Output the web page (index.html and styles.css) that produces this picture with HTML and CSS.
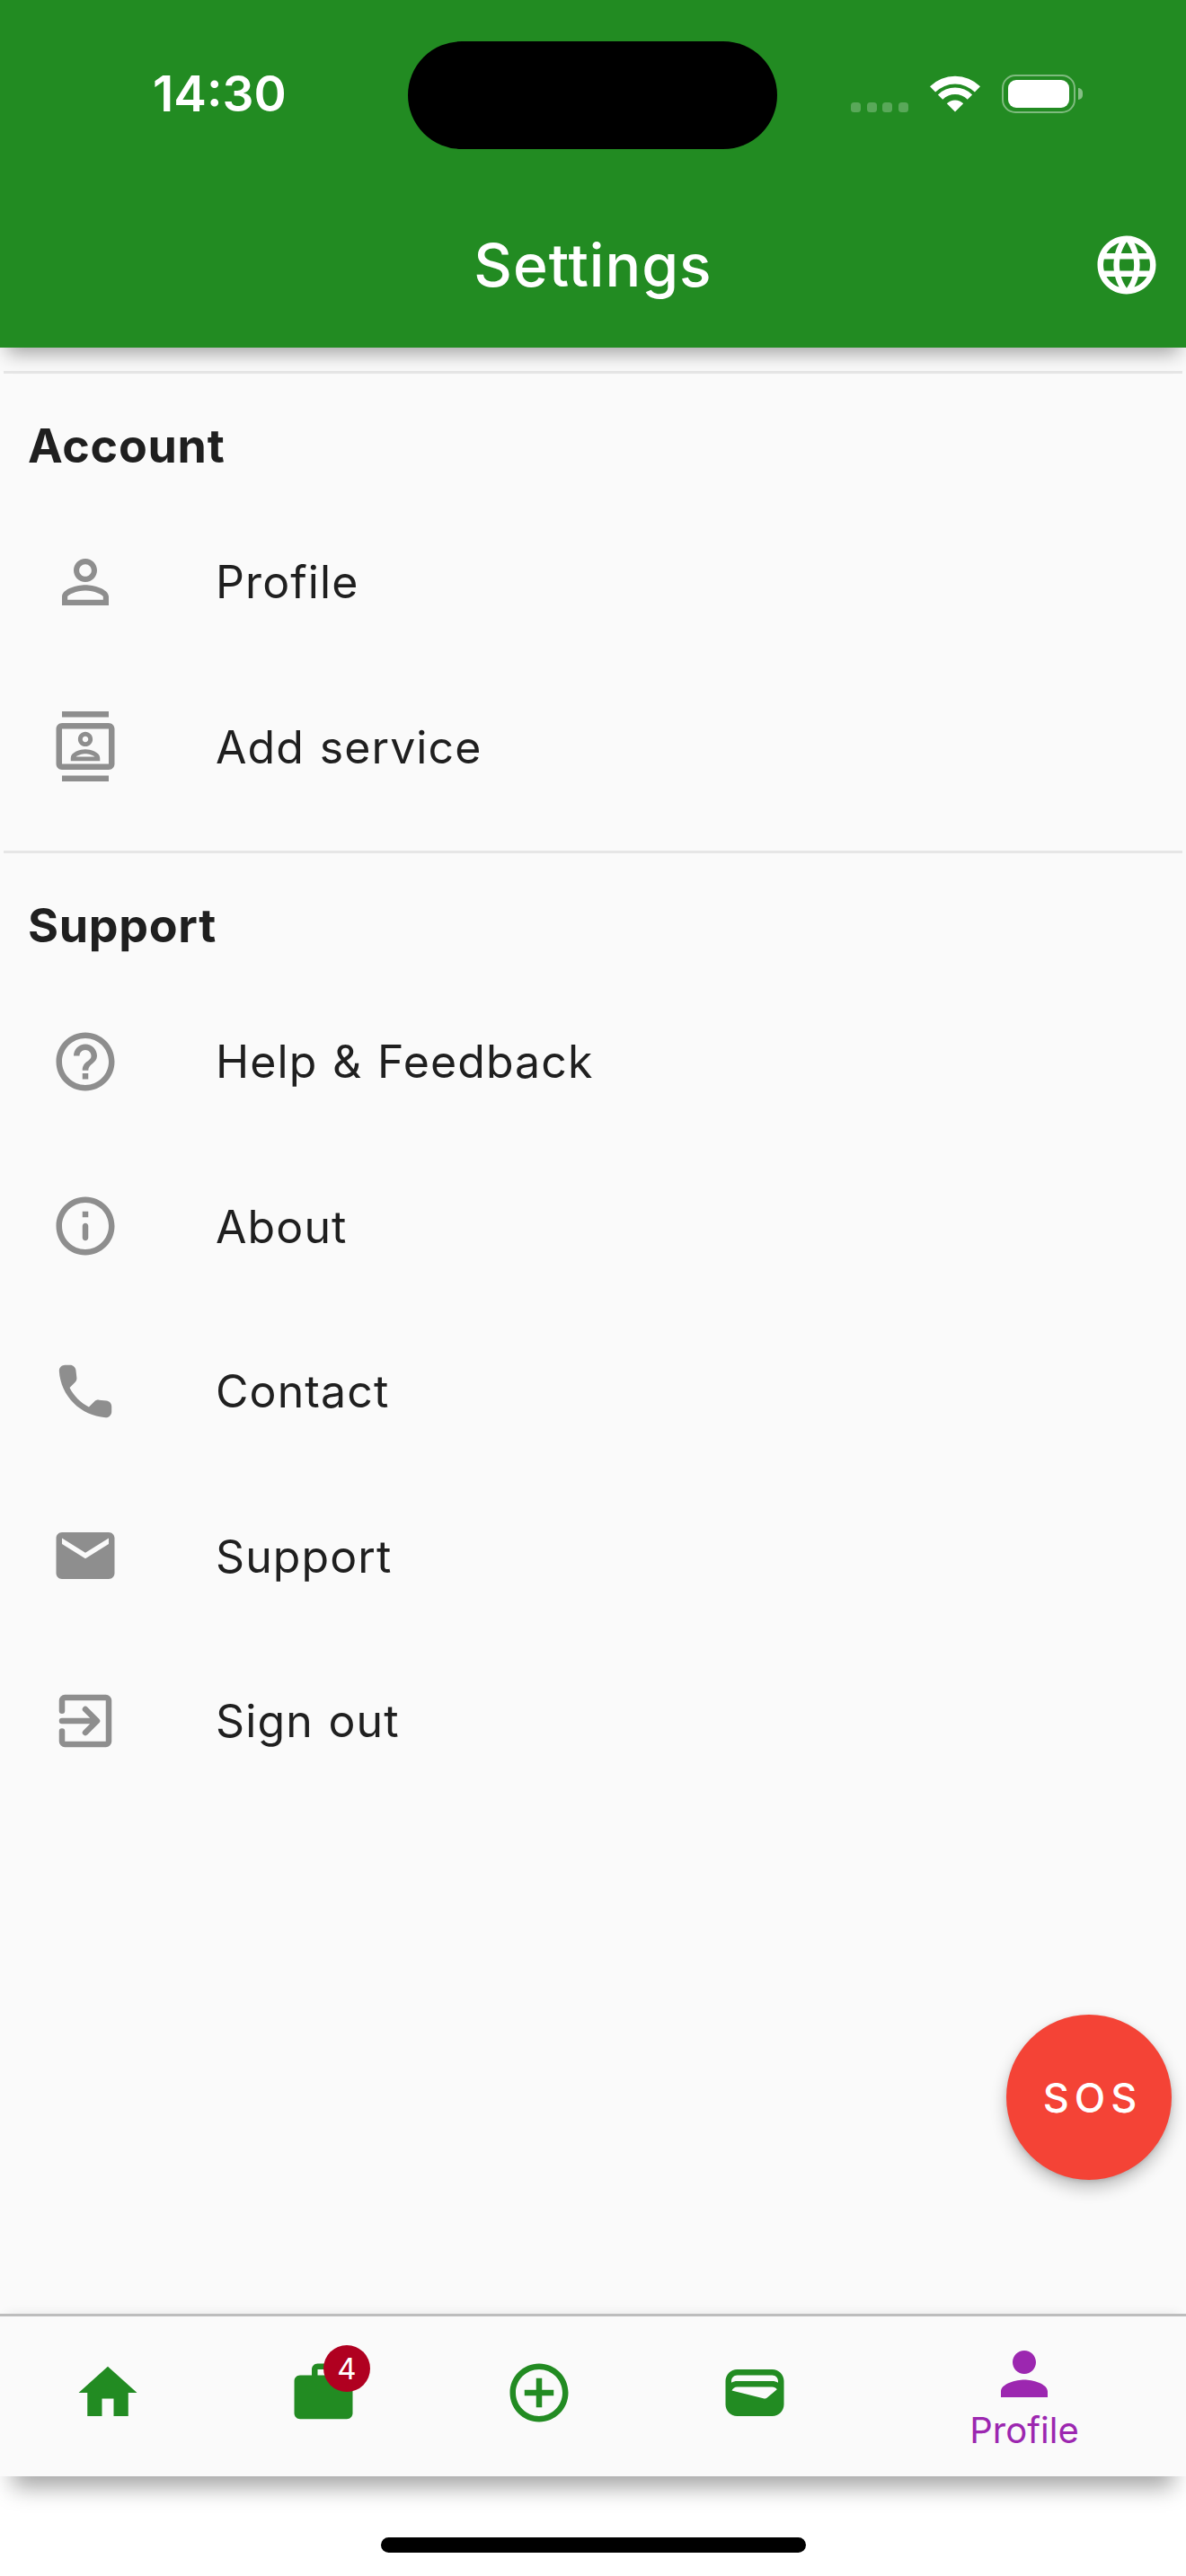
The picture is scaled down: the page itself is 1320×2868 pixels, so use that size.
FILE: index.html
```html
<!DOCTYPE html>
<html lang="en">
<head>
<meta charset="utf-8">
<title>Settings</title>
<link rel="stylesheet" href="styles.css">
</head>
<body>
<div class="screen">
  <header class="app-bar">
    <div class="status-bar">
      <span class="clock">14:30</span>
      <div class="island"></div>
      <div class="status-icons">
        <div class="signal"><i></i><i></i><i></i><i></i></div>
        <svg class="wifi" viewBox="0 0 56 41"><path d="M0 12.2A40 40 0 0 1 56 12.2L49.9 18.6A31 31 0 0 0 6.1 18.6ZM8.9 21.4A27 27 0 0 1 47.1 21.4L41.8 26.7A19.5 19.5 0 0 0 14.2 26.7ZM18.8 31.3A13 13 0 0 1 37.2 31.3L28 40.5Z"/></svg>
        <div class="battery"><div class="battery-fill"></div></div>
        <div class="battery-cap"></div>
      </div>
    </div>
    <div class="title-bar">
      <h1 class="title">Settings</h1>
      <svg class="icon globe" viewBox="0 0 24 24"><path d="M11.99 2C6.47 2 2 6.48 2 12s4.47 10 9.99 10C17.52 22 22 17.52 22 12S17.52 2 11.99 2zm6.93 6h-2.95c-.32-1.25-.78-2.45-1.38-3.56 1.84.63 3.37 1.91 4.33 3.56zM12 4.04c.83 1.2 1.48 2.53 1.91 3.96h-3.82c.43-1.43 1.08-2.76 1.91-3.96zM4.26 14C4.1 13.36 4 12.69 4 12s.1-1.36.26-2h3.38c-.08.66-.14 1.32-.14 2 0 .68.06 1.34.14 2H4.26zm.82 2h2.95c.32 1.25.78 2.45 1.38 3.56-1.84-.63-3.37-1.9-4.33-3.56zm2.95-8H5.08c.96-1.66 2.49-2.93 4.33-3.56C8.81 5.55 8.35 6.75 8.03 8zM12 19.96c-.83-1.2-1.48-2.53-1.91-3.96h3.82c-.43 1.43-1.08 2.76-1.91 3.96zM14.34 14H9.66c-.09-.66-.16-1.32-.16-2 0-.68.07-1.35.16-2h4.68c.09.65.16 1.32.16 2 0 .68-.07 1.34-.16 2zm.25 5.56c.6-1.11 1.06-2.31 1.38-3.56h2.95c-.96 1.65-2.49 2.93-4.33 3.56zM16.36 14c.08-.66.14-1.32.14-2 0-.68-.06-1.34-.14-2h3.38c.16.64.26 1.31.26 2s-.1 1.36-.26 2h-3.38z"/></svg>
    </div>
  </header>

  <main class="content">
    <section class="group">
      <h2 class="group-title">Account</h2>
      <div class="row">
        <svg class="icon" viewBox="0 0 24 24"><path d="M12 5.9c1.16 0 2.1.94 2.1 2.1s-.94 2.1-2.1 2.1S9.9 9.16 9.9 8s.94-2.1 2.1-2.1m0 9c2.97 0 6.1 1.46 6.1 2.1v1.1H5.9V17c0-.64 3.13-2.1 6.1-2.1M12 4C9.79 4 8 5.79 8 8s1.79 4 4 4 4-1.79 4-4-1.79-4-4-4zm0 9c-2.67 0-8 1.34-8 4v3h16v-3c0-2.66-5.33-4-8-4z"/></svg>
        <span class="row-label">Profile</span>
      </div>
      <div class="row">
        <svg class="icon" viewBox="0 0 24 24"><path d="M20 0H4v2h16V0zM4 24h16v-2H4v2zM20 4H4c-1.1 0-2 .9-2 2v12c0 1.1.9 2 2 2h16c1.1 0 2-.9 2-2V6c0-1.1-.9-2-2-2zm0 14H4V6h16v12zm-8-6c1.38 0 2.5-1.12 2.5-2.5S13.38 7 12 7 9.5 8.12 9.5 9.5 10.62 12 12 12zm0-3.5c.55 0 1 .45 1 1s-.45 1-1 1-1-.45-1-1 .45-1 1-1zm5 7.49C17 13.9 13.69 13 12 13s-5 .9-5 2.99V17h10v-1.01zm-8.19-.49c.61-.52 2.03-1 3.19-1 1.17 0 2.59.48 3.2 1H8.81z"/></svg>
        <span class="row-label">Add service</span>
      </div>
    </section>
    <section class="group">
      <h2 class="group-title">Support</h2>
      <div class="row">
        <svg class="icon" viewBox="0 0 24 24"><path d="M11 18h2v-2h-2v2zm1-16C6.48 2 2 6.48 2 12s4.48 10 10 10 10-4.48 10-10S17.52 2 12 2zm0 18c-4.41 0-8-3.59-8-8s3.59-8 8-8 8 3.59 8 8-3.59 8-8 8zm0-14c-2.21 0-4 1.79-4 4h2c0-1.1.9-2 2-2s2 .9 2 2c0 2-3 1.75-3 5h2c0-2.25 3-2.5 3-5 0-2.21-1.79-4-4-4z"/></svg>
        <span class="row-label">Help &amp; Feedback</span>
      </div>
      <div class="row">
        <svg class="icon" viewBox="0 0 24 24"><path d="M11 7h2v2h-2zM12 17c-.55 0-1-.45-1-1v-4c0-.55.45-1 1-1s1 .45 1 1v4c0 .55-.45 1-1 1zM12 2C6.48 2 2 6.48 2 12s4.48 10 10 10 10-4.48 10-10S17.52 2 12 2zm0 18c-4.41 0-8-3.59-8-8s3.59-8 8-8 8 3.59 8 8-3.59 8-8 8z"/></svg>
        <span class="row-label">About</span>
      </div>
      <div class="row">
        <svg class="icon" viewBox="0 0 24 24"><path d="M19.23 15.26l-2.54-.29c-.61-.07-1.21.14-1.64.57l-1.84 1.84c-2.83-1.44-5.15-3.75-6.59-6.59l1.85-1.85c.43-.43.64-1.03.57-1.64l-.29-2.52c-.12-1.01-.97-1.77-1.99-1.77H5.03c-1.13 0-2.07.94-2 2.07.53 8.54 7.36 15.36 15.89 15.89 1.13.07 2.07-.87 2.07-2v-1.73c.01-1.01-.75-1.86-1.76-1.98z"/></svg>
        <span class="row-label">Contact</span>
      </div>
      <div class="row">
        <svg class="icon" viewBox="0 0 24 24"><path d="M20 4H4c-1.1 0-1.99.9-1.99 2L2 18c0 1.1.9 2 2 2h16c1.1 0 2-.9 2-2V6c0-1.1-.9-2-2-2zm0 4l-8 5-8-5V6l8 5 8-5v2z"/></svg>
        <span class="row-label">Support</span>
      </div>
      <div class="row">
        <svg class="icon" viewBox="0 0 24 24"><path class="stroke" d="M4 8.5V5a1 1 0 0 1 1-1h14a1 1 0 0 1 1 1v14a1 1 0 0 1-1 1H5a1 1 0 0 1-1-1v-3.5M4 12h11.5M12 8l4 4-4 4"/></svg>
        <span class="row-label">Sign out</span>
      </div>
    </section>
  </main>

  <button class="sos" type="button">SOS</button>

  <nav class="tab-bar">
    <div class="tab">
      <svg class="icon" viewBox="0 0 24 24"><path d="M10 20v-6h4v6h5v-8h3L12 3 2 12h3v8z"/></svg>
    </div>
    <div class="tab">
      <div class="tab-icon">
        <svg class="icon" viewBox="0 0 24 24"><path d="M20 6h-4V4c0-1.11-.89-2-2-2h-4c-1.11 0-2 .89-2 2v2H4c-1.11 0-1.99.89-1.99 2L2 19c0 1.11.89 2 2 2h16c1.11 0 2-.89 2-2V8c0-1.11-.89-2-2-2zm-6 0h-4V4h4v2z"/></svg>
        <span class="badge">4</span>
      </div>
    </div>
    <div class="tab">
      <svg class="icon" viewBox="0 0 24 24"><path d="M13 7h-2v4H7v2h4v4h2v-4h4v-2h-4V7zm-1-5C6.48 2 2 6.48 2 12s4.48 10 10 10 10-4.48 10-10S17.52 2 12 2zm0 18c-4.41 0-8-3.59-8-8s3.59-8 8-8 8 3.59 8 8-3.59 8-8 8z"/></svg>
    </div>
    <div class="tab">
      <svg class="icon" viewBox="0 0 24 24"><path d="M18 4H6C3.79 4 2 5.79 2 8v8c0 2.21 1.79 4 4 4h12c2.21 0 4-1.79 4-4V8c0-2.21-1.79-4-4-4zm-1.86 9.77c-.24.2-.57.28-.88.2L4.15 11.25C4.45 10.52 5.16 10 6 10h12c.67 0 1.26.34 1.63.84l-3.49 2.93zM6 6h12c1.1 0 2 .9 2 2v.55c-.59-.34-1.27-.55-2-.55H6c-.73 0-1.41.21-2 .55V8c0-1.1.9-2 2-2z"/></svg>
    </div>
    <div class="tab tab-active">
      <svg class="icon" viewBox="0 0 24 24"><path d="M12 12c2.21 0 4-1.79 4-4s-1.79-4-4-4-4 1.79-4 4 1.79 4 4 4zm0 2c-2.67 0-8 1.34-8 4v2h16v-2c0-2.66-5.33-4-8-4z"/></svg>
      <span class="tab-label">Profile</span>
    </div>
  </nav>

  <footer class="home-area"><div class="home-indicator"></div></footer>
</div>
</body>
</html>
```

FILE: styles.css
```css
* { box-sizing: border-box; }

html, body {
  margin: 0;
  padding: 0;
  background: #fff;
}

.screen {
  position: relative;
  display: flex;
  flex-direction: column;
  width: 1320px;
  height: 2868px;
  overflow: hidden;
  font-family: Inter, "Liberation Sans", sans-serif;
  background: #fff;
}

.icon {
  display: block;
  flex: none;
  width: 78px;
  height: 78px;
  fill: currentColor;
}

.stroke {
  fill: none;
  stroke: currentColor;
  stroke-width: 2;
  stroke-linecap: round;
  stroke-linejoin: round;
}

/* Header */
.app-bar {
  position: relative;
  z-index: 2;
  flex: none;
  height: 387px;
  color: #fff;
  background: #228b22;
  box-shadow: 0 14px 20px -8px rgba(0, 0, 0, .36);
}

.status-bar {
  display: flex;
  align-items: center;
  height: 166px;
  padding-top: 46px;
}

.clock {
  width: 454px;
  padding-left: 170px;
  padding-bottom: 5px;
  font-size: 55px;
  font-weight: 600;
}

.island {
  flex: none;
  width: 411px;
  height: 120px;
  border-radius: 60px;
  background: #000;
}

.status-icons {
  display: flex;
  align-items: flex-start;
  height: 120px;
  margin-left: 82px;
}

.signal {
  display: flex;
  gap: 6.5px;
  margin-top: 68px;
}

.signal i {
  display: block;
  width: 11px;
  height: 11px;
  border-radius: 3.5px;
  background: rgba(255, 255, 255, .25);
}

.wifi {
  width: 56px;
  height: 41px;
  margin-left: 24px;
  margin-top: 38px;
  fill: #fff;
}

.battery {
  width: 82px;
  height: 43px;
  margin-left: 24px;
  margin-top: 37px;
  padding: 4px 5px;
  border: 2.5px solid rgba(255, 255, 255, .42);
  border-radius: 15px;
}

.battery-fill {
  height: 100%;
  border-radius: 9px;
  background: #fff;
}

.battery-cap {
  width: 5px;
  height: 13px;
  margin-left: 3px;
  margin-top: 52px;
  border-radius: 0 6px 6px 0;
  background: rgba(255, 255, 255, .45);
}

.title-bar {
  display: grid;
  grid-template-columns: 1fr auto 1fr;
  align-items: center;
  height: 78px;
  margin-top: 90px;
  padding-right: 27px;
  padding-left: 27px;
}

.title {
  grid-column: 2;
  margin: 0;
  font-size: 66px;
  font-weight: 500;
  letter-spacing: 1px;
  line-height: 78px;
}

.globe { justify-self: end; }

/* Settings list */
.content {
  flex: 1;
  padding-top: 26px;
  color: #1f1f1f;
  background: #fafafa;
}

.group {
  margin: 0 0 24px;
}

.group::before {
  content: "";
  display: block;
  height: 3px;
  margin: 0 4px;
  background: #e6e6e6;
}

.group-title {
  height: 140px;
  margin: 0;
  padding: 51px 0 0 31px;
  font-size: 52px;
  font-weight: 700;
  letter-spacing: .7px;
  line-height: 60px;
}

.row {
  display: flex;
  align-items: center;
  gap: 106px;
  height: 183.5px;
  padding-left: 56px;
  color: #8e8e8e;
}

.row-label {
  padding-top: 1px;
  color: #1f1f1f;
  font-size: 50px;
  letter-spacing: 1.1px;
  word-spacing: 1.5px;
}

/* Emergency action */
.sos {
  position: absolute;
  z-index: 1;
  left: 1120px;
  top: 2243px;
  width: 184px;
  height: 184px;
  padding: 0 0 0 8px;
  border: 0;
  border-radius: 50%;
  color: #fff;
  background: #f44336;
  font-family: inherit;
  font-size: 45px;
  font-weight: 500;
  letter-spacing: 6px;
  box-shadow: 0 9px 18px rgba(0, 0, 0, .24), 0 2px 5px rgba(0, 0, 0, .12);
}

/* Bottom navigation */
.tab-bar {
  position: relative;
  z-index: 2;
  display: flex;
  flex: none;
  height: 181px;
  color: #228b22;
  background: #fafafa;
  border-top: 3px solid #bdbdbd;
  box-shadow: 0 26px 24px -14px rgba(0, 0, 0, .36), 0 -8px 12px -8px rgba(0, 0, 0, .08);
}

.tab {
  flex: 1;
  display: flex;
  flex-direction: column;
  align-items: center;
  padding-top: 45.5px;
}

.tab-active {
  flex: 1.5;
  padding-top: 25px;
  color: #9c27b0;
}

.tab-icon { position: relative; }

.badge {
  position: absolute;
  left: 39px;
  top: -13.5px;
  width: 52px;
  height: 52px;
  border-radius: 50%;
  color: #fff;
  background: #b00020;
  font-size: 33px;
  line-height: 52px;
  text-align: center;
}

.tab-label {
  margin-top: -1px;
  font-size: 40px;
  line-height: 50px;
}

.home-area {
  flex: none;
  height: 111px;
  padding-top: 68px;
}

.home-indicator {
  width: 473px;
  height: 17px;
  margin: 0 auto;
  border-radius: 9px;
  background: #000;
}
```
